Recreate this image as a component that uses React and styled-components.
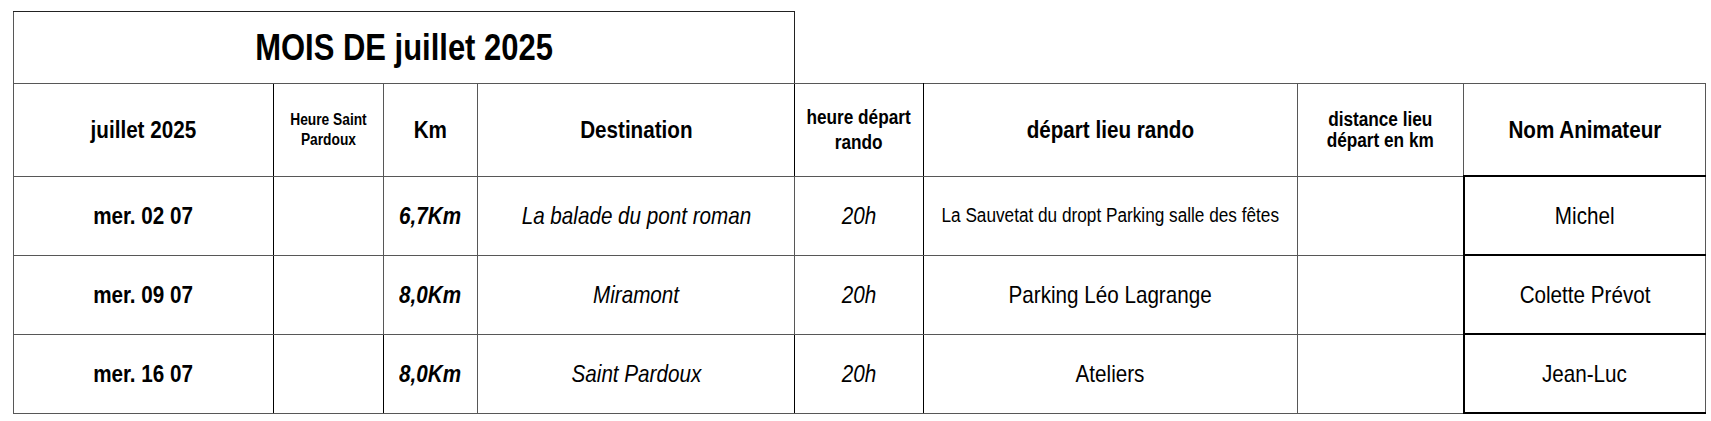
import React from "react";
import styled, { createGlobalStyle } from "styled-components";

const GlobalStyle = createGlobalStyle`
  html, body {
    margin: 0;
    padding: 0;
    background: #ffffff;
  }
  body {
    font-family: "Liberation Sans", Arial, sans-serif;
    color: #000;
  }
`;

const GRAY = "#575757";
const DARK = "#000000";

const columns = [260, 110, 94, 317, 129, 374, 166, 242];

// dark = black line on the right side of the cell
const header = [
  { text: "juillet 2025", size: 24, dark: true },
  { text: ["Heure Saint", "Pardoux"], size: 16, lh: 20 },
  { text: "Km", size: 24 },
  { text: "Destination", size: 24, dark: true },
  { text: ["heure départ", "rando"], size: 20, lh: 25, dark: true },
  { text: "départ lieu rando", size: 24 },
  { text: ["distance lieu", "départ en km"], size: 20, lh: 21 },
  { text: "Nom Animateur", size: 24 },
];

const rows = [
  {
    date: "mer. 02 07",
    km: "6,7Km",
    dest: "La balade du pont roman",
    hour: "20h",
    place: "La Sauvetat du dropt Parking salle des fêtes",
    placeSize: 20,
    name: "Michel",
  },
  {
    date: "mer. 09 07",
    km: "8,0Km",
    dest: "Miramont",
    hour: "20h",
    place: "Parking Léo Lagrange",
    placeSize: 24,
    name: "Colette Prévot",
  },
  {
    date: "mer. 16 07",
    km: "8,0Km",
    dest: "Saint Pardoux",
    hour: "20h",
    place: "Ateliers",
    placeSize: 24,
    name: "Jean-Luc",
  },
];

const Sheet = styled.table`
  border-collapse: collapse;
  table-layout: fixed;
  width: 1692px;
  margin: 11px 0 0 13px;
`;

const TitleCell = styled.td`
  height: 71px;
  padding: 0;
  border: 1px solid ${GRAY};
  border-top-color: #222;
  border-right-color: #222;
`;

const EmptyCell = styled.td`
  border: none;
  padding: 0;
`;

const HeadCell = styled.th`
  height: 91px;
  padding: 0;
  border: 1px solid ${GRAY};
  border-right-color: ${(p) => (p.$dark ? DARK : GRAY)};
  font-weight: 700;
  vertical-align: middle;
`;

const Cell = styled.td`
  height: 78px;
  padding: 0;
  border: 1px solid ${GRAY};
  border-right-color: ${(p) => (p.$dark ? DARK : GRAY)};
  vertical-align: middle;
`;

const NameCell = styled(Cell)`
  height: 77px;
  border: 2px solid ${DARK};
  border-right: 1px solid ${GRAY};
`;

const Box = styled.div`
  display: flex;
  justify-content: center;
  align-items: center;
`;

const Txt = styled.span`
  display: inline-block;
  white-space: nowrap;
  text-align: center;
  transform: scaleX(0.86);
  font-size: ${(p) => p.$size || 24}px;
  line-height: ${(p) => (p.$lh ? `${p.$lh}px` : "normal")};
  font-weight: ${(p) => (p.$bold ? 700 : 400)};
  font-style: ${(p) => (p.$italic ? "italic" : "normal")};
`;

const Title = styled(Txt)`
  font-size: 36px;
  font-weight: 700;
`;

const Lines = ({ text }) =>
  Array.isArray(text)
    ? text.map((t, i) => (
        <React.Fragment key={i}>
          {i > 0 && <br />}
          {t}
        </React.Fragment>
      ))
    : text;

export default function App() {
  return (
    <>
      <GlobalStyle />
      <Sheet>
        <colgroup>
          {columns.map((w, i) => (
            <col key={i} style={{ width: w }} />
          ))}
        </colgroup>
        <tbody>
          <tr>
            <TitleCell colSpan={4}>
              <Box>
                <Title>MOIS DE juillet 2025</Title>
              </Box>
            </TitleCell>
            <EmptyCell colSpan={4} />
          </tr>
          <tr>
            {header.map((h, i) => (
              <HeadCell key={i} $dark={h.dark}>
                <Box>
                  <Txt $bold $size={h.size} $lh={h.lh}>
                    <Lines text={h.text} />
                  </Txt>
                </Box>
              </HeadCell>
            ))}
          </tr>
          {rows.map((r, i) => (
            <tr key={i}>
              <Cell $dark>
                <Box>
                  <Txt $bold>{r.date}</Txt>
                </Box>
              </Cell>
              <Cell $dark={i === 2} />
              <Cell>
                <Box>
                  <Txt $bold $italic>
                    {r.km}
                  </Txt>
                </Box>
              </Cell>
              <Cell $dark={i === 2}>
                <Box>
                  <Txt $italic>{r.dest}</Txt>
                </Box>
              </Cell>
              <Cell $dark>
                <Box>
                  <Txt $italic>{r.hour}</Txt>
                </Box>
              </Cell>
              <Cell>
                <Box>
                  <Txt $size={r.placeSize}>{r.place}</Txt>
                </Box>
              </Cell>
              <Cell />
              <NameCell>
                <Box>
                  <Txt>{r.name}</Txt>
                </Box>
              </NameCell>
            </tr>
          ))}
        </tbody>
      </Sheet>
    </>
  );
}
